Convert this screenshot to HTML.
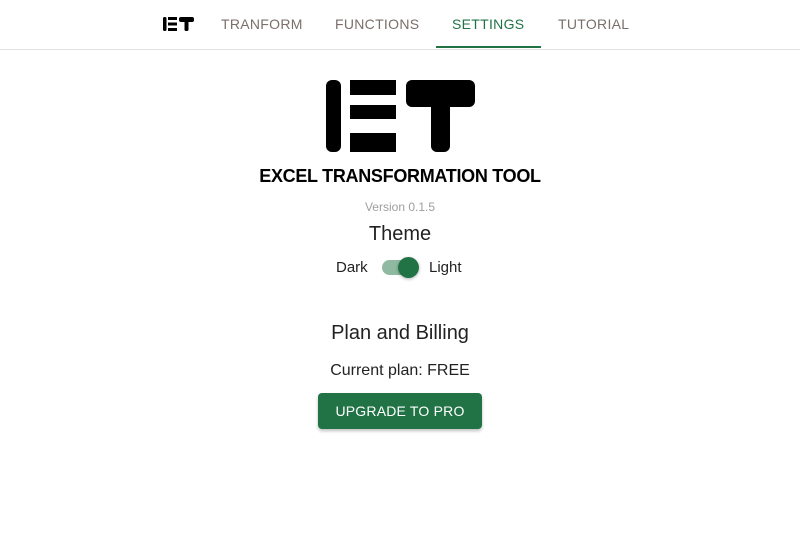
<!DOCTYPE html>
<html><head><style>
body{margin:0;width:800px;height:560px;background:#fff;font-family:"Liberation Sans",Arial,sans-serif;position:relative;overflow:hidden}
.nav{position:absolute;left:0;top:0;width:800px;height:49px;border-bottom:1px solid #e0e0e0}
.tab{position:absolute;top:16px;font-size:14px;letter-spacing:0.3px;color:#7a6f6a}
.t{position:absolute;left:0;width:800px;text-align:center}
</style></head><body>
<div class="nav">
<svg style="position:absolute;left:163px;top:17px" width="32" height="14" viewBox="0 0 32 14">
<rect x="0" y="0" width="3.5" height="14" rx="1.5" fill="#000"/>
<rect x="5" y="0" width="9" height="3" fill="#000"/><rect x="5" y="5.5" width="9" height="3" fill="#000"/><rect x="5" y="11" width="9" height="3" fill="#000"/>
<rect x="16" y="0" width="15" height="5" rx="2" fill="#000"/><rect x="21.5" y="0" width="4" height="14" rx="1.5" fill="#000"/>
</svg>
<div class="tab" style="left:221px">TRANFORM</div>
<div class="tab" style="left:335px">FUNCTIONS</div>
<div class="tab" style="left:452px;color:#217346">SETTINGS</div>
<div class="tab" style="left:558px">TUTORIAL</div>
<div style="position:absolute;left:436px;top:46px;width:105px;height:2px;background:#217346"></div>
</div>
<svg style="position:absolute;left:324px;top:80px" width="152" height="73" viewBox="0 0 152 73">
<rect x="2" y="0" width="15" height="72" rx="6" fill="#000"/>
<rect x="26" y="0" width="46" height="15" fill="#000"/>
<rect x="26" y="25" width="46" height="14" fill="#000"/>
<rect x="26" y="53" width="46" height="19" fill="#000"/>
<rect x="82" y="0" width="69" height="27" rx="6" fill="#000"/>
<rect x="107" y="0" width="19" height="72" rx="6" fill="#000"/>
</svg>
<div class="t" style="top:166px;font-size:18px;font-weight:bold;color:#000;letter-spacing:-0.3px">EXCEL TRANSFORMATION TOOL</div>
<div class="t" style="top:200px;font-size:12px;color:#9e9e9e">Version 0.1.5</div>
<div class="t" style="top:223px;font-size:20px;color:#222">Theme</div>
<div style="position:absolute;left:336px;top:259px;font-size:15px;color:#222">Dark</div>
<div style="position:absolute;left:429px;top:259px;font-size:15px;color:#222">Light</div>
<div style="position:absolute;left:382px;top:260px;width:34px;height:15px;border-radius:7.5px;background:#90b9a1"></div>
<div style="position:absolute;left:398px;top:257px;width:21px;height:21px;border-radius:50%;background:#217346;box-shadow:0 1px 3px rgba(0,0,0,.3)"></div>
<div class="t" style="top:322px;font-size:20px;color:#222">Plan and Billing</div>
<div class="t" style="top:362px;font-size:16px;color:#222">Current plan: FREE</div>
<div style="position:absolute;left:318px;top:393px;width:164px;height:36px;background:#217346;border-radius:4px;box-shadow:0 2px 3px rgba(0,0,0,.25);color:#fff;font-size:14px;line-height:36px;text-align:center;letter-spacing:0.2px">UPGRADE TO PRO</div>
</body></html>
